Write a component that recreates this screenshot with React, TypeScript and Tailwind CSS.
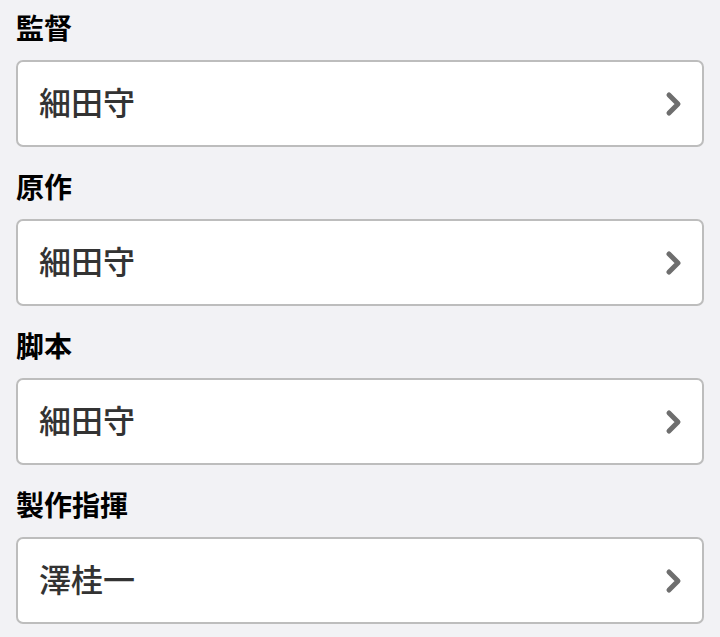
const rows = [
  { label: '監督', value: '細田守' },
  { label: '原作', value: '細田守' },
  { label: '脚本', value: '細田守' },
  { label: '製作指揮', value: '澤桂一' },
];

function Chevron() {
  return (
    <svg width="22" height="26" viewBox="0 0 22 26" className="shrink-0">
      <path d="M6 4 L15 13 L6 22" fill="none" stroke="#6e6e6e" strokeWidth="5" strokeLinecap="round" strokeLinejoin="round" />
    </svg>
  );
}

export default function App() {
  return (
    <div
      className="min-h-screen w-[720px] bg-[#f2f2f5] pl-4 pr-4 pt-[7px]"
      style={{ fontFamily: '"Noto Sans CJK JP", "Noto Sans", sans-serif' }}
    >
      {rows.map((row, i) => (
        <div key={i} className="mb-[19px] last:mb-0">
          <div className="text-[28px] font-bold leading-[40px] text-black">{row.label}</div>
          <button className="mt-[13px] flex h-[87px] w-full items-center justify-between rounded-[7px] border-2 border-[#bdbdbd] bg-white pl-[21px] pr-[17px] text-left">
            <span className="mb-[6px] text-[32px] font-medium leading-none text-[#333333]">{row.value}</span>
            <Chevron />
          </button>
        </div>
      ))}
    </div>
  );
}
